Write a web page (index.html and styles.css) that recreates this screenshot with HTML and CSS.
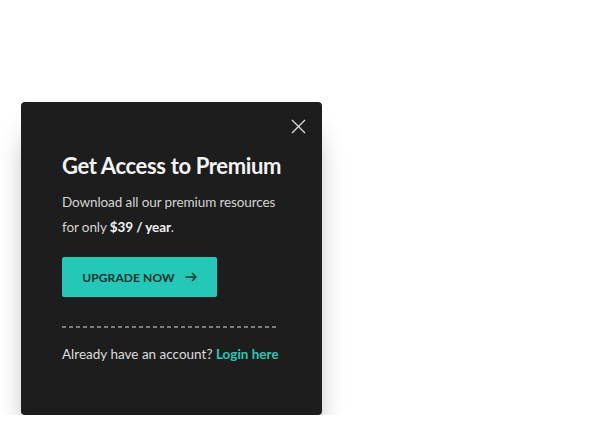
FILE: index.html
```html
<!DOCTYPE html>
<html lang="en">
<head>
<meta charset="utf-8">
<title>Get Access to Premium</title>
<link rel="stylesheet" href="styles.css">
</head>
<body>
<div class="modal">
  <div class="modal-top">
    <button class="close" aria-label="Close">
      <svg width="15" height="15" viewBox="0 0 15 15"><path d="M1 1L14 14M14 1L1 14" stroke="#d8d8d8" stroke-width="1.4" fill="none"/></svg>
    </button>
  </div>
  <div class="modal-body">
    <h2 class="title">Get Access to Premium</h2>
    <p class="desc">Download all our premium resources<br>for only <strong>$39 / year</strong>.</p>
    <a class="btn" href="#">UPGRADE NOW
      <svg width="12" height="10" viewBox="0 0 12 10"><path d="M0.5 5H11M7 1l4 4-4 4" stroke="#13302d" stroke-width="1.4" fill="none"/></svg>
    </a>
    <div class="divider"></div>
    <p class="login">Already have an account? <a href="#">Login here</a></p>
  </div>
</div>
</body>
</html>
```
FILE: styles.css
```css
html, body {
  margin: 0;
  padding: 0;
  background: #ffffff;
}
body {
  font-family: Lato, "Liberation Sans", sans-serif;
}
.modal {
  margin: 102px 0 0 21px;
  width: 301px;
  height: 313px;
  box-sizing: border-box;
  background: #1d1d1d;
  border-radius: 4px;
  box-shadow: 0 26px 28px -10px rgba(0, 0, 0, 0.45);
  padding: 17px 16px 0 41px;
}
.modal-top {
  display: flex;
  justify-content: flex-end;
}
.close {
  background: none;
  border: 0;
  padding: 0;
  width: 15px;
  height: 15px;
  display: block;
  cursor: pointer;
}
.close svg { display: block; }
.modal-body {
  padding-top: 18px;
}
.title {
  margin: 0;
  color: #f4f4f4;
  font-size: 22px;
  font-weight: 700;
  line-height: 28px;
  letter-spacing: -0.35px;
  white-space: nowrap;
}
.desc {
  margin: 10px 0 0;
  color: #d4d4d4;
  font-size: 13.5px;
  line-height: 25px;
  letter-spacing: -0.1px;
  white-space: nowrap;
}
.desc strong {
  color: #f2f2f2;
  font-weight: 700;
}
.btn {
  margin-top: 17px;
  display: flex;
  align-items: center;
  justify-content: center;
  gap: 10px;
  width: 155px;
  height: 40px;
  box-sizing: border-box;
  background: #24c8b6;
  border-radius: 2px;
  color: #13302d;
  text-decoration: none;
  font-size: 12px;
  font-weight: 700;
  letter-spacing: 0.1px;
}
.btn svg { display: block; }
.divider {
  margin-top: 29px;
  width: 217px;
  height: 2px;
  background: repeating-linear-gradient(to right, #7d7d7d 0 4px, transparent 4px 7px);
}
.login {
  margin: 16px 0 0;
  color: #dcdcdc;
  font-size: 13.5px;
  line-height: 20px;
  letter-spacing: 0;
  white-space: nowrap;
}
.login a {
  color: #24c8b6;
  font-weight: 700;
  text-decoration: none;
}
```
